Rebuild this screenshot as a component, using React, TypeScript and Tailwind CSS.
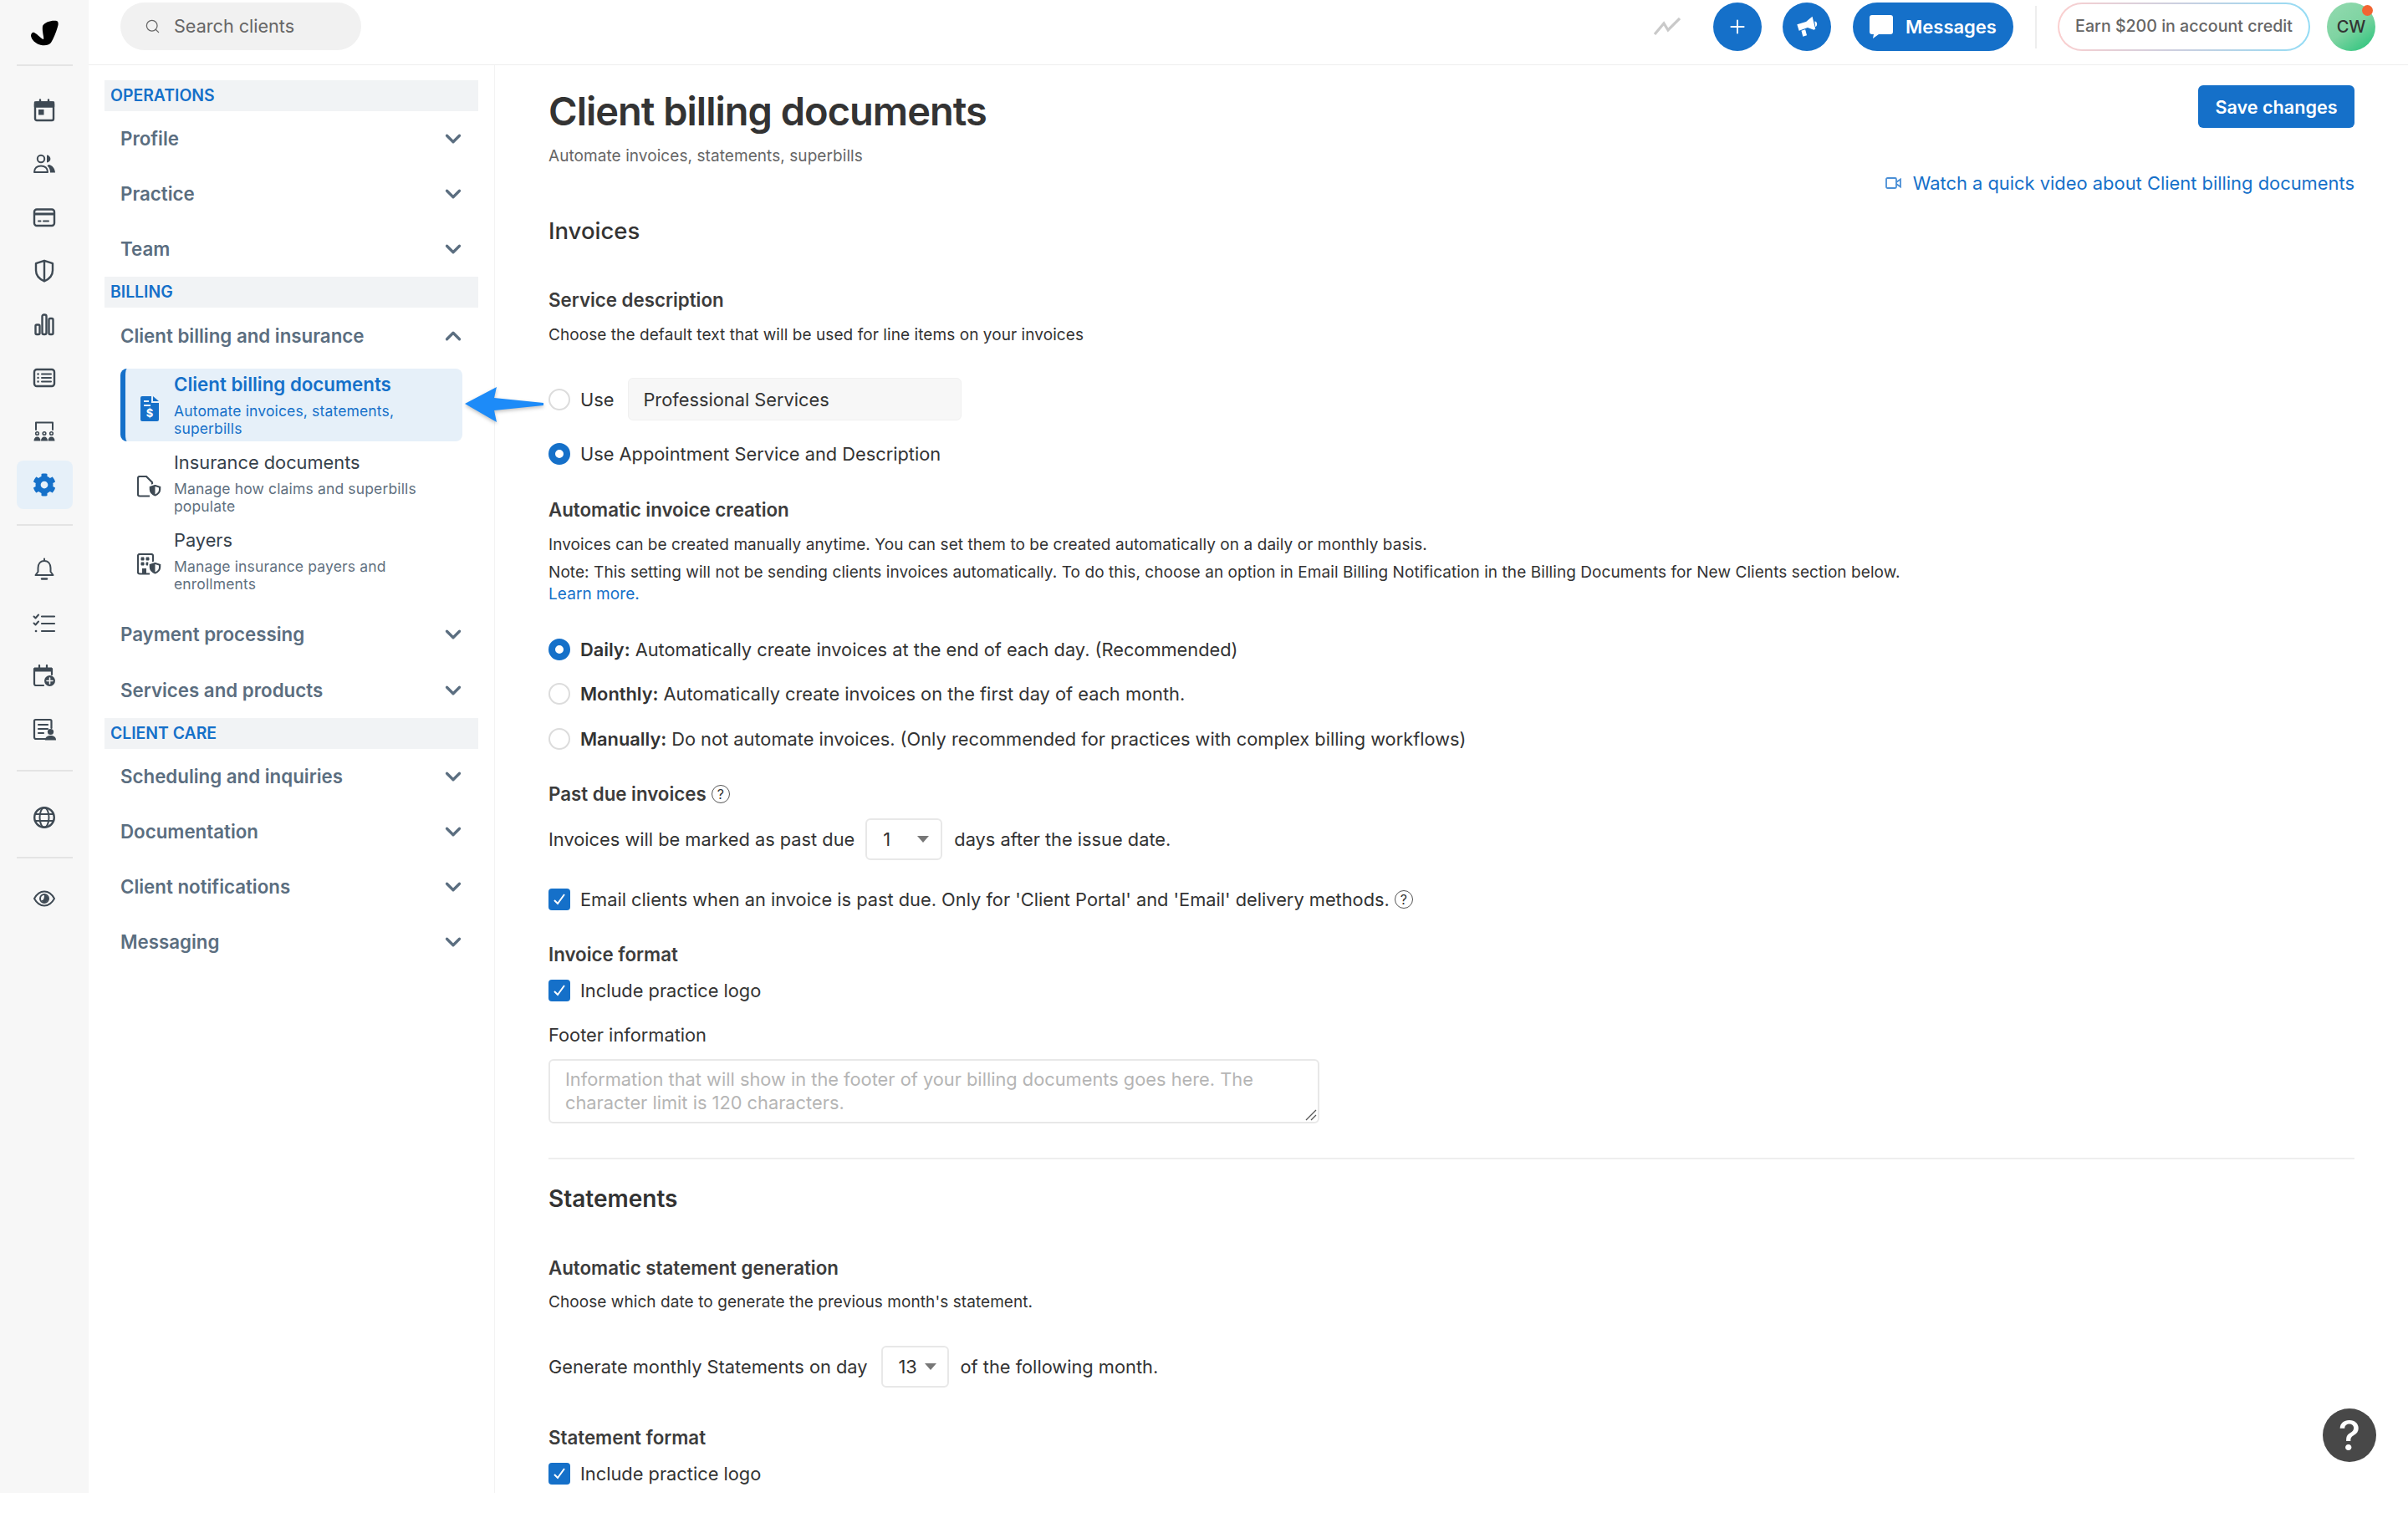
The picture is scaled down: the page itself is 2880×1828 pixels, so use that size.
import React from 'react';
import { ChevronDown, ChevronUp, Plus, Search } from 'lucide-react';
import { FaCog } from 'react-icons/fa';

const Svg = ({ children, size = 28 }: { children: React.ReactNode; size?: number }) => (
  <svg width={size} height={size} viewBox="0 0 28 28" fill="none" stroke="currentColor" strokeWidth="2.4" strokeLinecap="round" strokeLinejoin="round">
    {children}
  </svg>
);

const railTop = [
  <Svg key="cal">
    <rect x="3" y="4.5" width="22" height="21.5" rx="2" />
    <path d="M3 4.5h22v5H3z" fill="currentColor" />
    <path d="M9 1.5v3M19 1.5v3" />
    <rect x="7" y="13" width="6.5" height="6.5" fill="currentColor" stroke="none" />
  </Svg>,
  <Svg key="people">
    <circle cx="10" cy="8" r="4.2" strokeWidth="2" />
    <path d="M17 3.6a4.4 4.4 0 0 1 0 8.8z" fill="currentColor" stroke="none" />
    <path d="M2 24c0-5 3.500-7.500 8-7.500s8 2.500 8 7.500z" strokeWidth="2" />
    <path d="M19 15c4.500.5 7.500 4 8 9.500h-6c0-3.500-1-6-3.500-8z" fill="currentColor" stroke="none" />
  </Svg>,
  <Svg key="card">
    <rect x="2" y="4.500" width="24" height="19.500" rx="3" />
    <path d="M2 8.500h24v3H2z" fill="currentColor" stroke="none" />
    <path d="M7 18.500h2.500M13 18.500h6" strokeWidth="2" />
  </Svg>,
  <Svg key="shield">
    <path d="M14 1.800l10 3.400v8.300c0 6.500-4.500 10.500-10 13-5.500-2.500-10-6.500-10-13V5.200zM14 2v24" />
  </Svg>,
  <Svg key="chart">
    <rect x="3.500" y="14.500" width="5" height="11.500" rx="1.500" />
    <rect x="11.500" y="2.500" width="5" height="23.500" rx="2" />
    <rect x="19.500" y="7" width="5" height="19" rx="1.500" />
  </Svg>,
  <Svg key="list">
    <rect x="2" y="4" width="24" height="20" rx="3" />
    <path d="M11 9.500h11M11 14h11M11 18.500h11" strokeWidth="2" />
    <path d="M6.500 9.500h.1M6.500 14h.1M6.500 18.500h.1" strokeWidth="2.400" />
  </Svg>,
  <Svg key="room">
    <path d="M4 12V3.500h20V12" strokeWidth="2" />
    <circle cx="5.500" cy="16.500" r="1.800" strokeWidth="1.600" />
    <circle cx="14" cy="16.500" r="1.800" strokeWidth="1.600" />
    <circle cx="22.500" cy="16.500" r="1.800" strokeWidth="1.600" />
    <path d="M1.500 25.500c0-3 1.500-5 4-5s4 2 4 5zM10 25.500c0-3 1.500-5 4-5s4 2 4 5zM18.500 25.500c0-3 1.500-5 4-5s4 2 4 5z" fill="currentColor" stroke="none" />
  </Svg>,
];

const railMid = [
  <Svg key="bell">
    <path d="M14 1.500v2.500M14 4c-5 0-7.500 4-7.500 8.500v4.500l-3 4h21l-3-4v-4.500C21.500 8 19 4 14 4z" strokeWidth="2" />
    <path d="M11 25.500h6" strokeWidth="2.400" />
  </Svg>,
  <Svg key="tasks">
    <path d="M1.500 6.500l2 2 3.500-4M1.500 14.500l2 2 3.500-4" strokeWidth="2" />
    <path d="M11 6.500h15M11 15h15M11 24h15" strokeWidth="2.200" />
    <path d="M4 24h.1" strokeWidth="2.600" />
  </Svg>,
  <Svg key="calplus">
    <path d="M13 25H4a2 2 0 0 1-2-2V5h21v7" strokeWidth="2.200" />
    <path d="M2 3.500h21v5H2z" fill="currentColor" stroke="none" />
    <path d="M8 1v3M17 1v3" strokeWidth="2.200" />
    <circle cx="20.500" cy="19.500" r="6.500" fill="currentColor" stroke="none" />
    <path d="M20.500 16v7M17 19.500h7" stroke="#f7f7f7" strokeWidth="1.600" />
  </Svg>,
  <Svg key="docperson">
    <path d="M16 25H4a2 2 0 0 1-2-2V3.500a1.500 1.500 0 0 1 1.500-1.500H21a1.500 1.500 0 0 1 1.500 1.500V12" strokeWidth="2.200" />
    <path d="M7 8h11M7 13h11M7 18h6" strokeWidth="2.200" />
    <circle cx="21.500" cy="16.500" r="3.600" fill="currentColor" stroke="none" />
    <path d="M15 26.500c0-4 3-5.500 6.500-5.500s6.500 1.500 6.500 5.500z" fill="currentColor" stroke="none" />
  </Svg>,
];

const RailButton = ({ children, active }: { children: React.ReactNode; active?: boolean }) => (
  <div className={`flex h-[58px] w-[67px] items-center justify-center rounded-[8px] ${active ? 'bg-[#e6f0f9] text-[#1570c9]' : 'text-[#3f4a54]'}`}>
    {children}
  </div>
);

const RailLine = ({ className }: { className: string }) => <div className={`h-[2px] w-[67px] bg-[#e4e4e4] ${className}`} />;

function Rail() {
  return (
    <aside className="flex h-full w-[106px] shrink-0 flex-col items-center bg-[#f7f7f7]">
      <div className="flex h-[77px] items-center justify-center">
        <svg width="33" height="31" viewBox="0 0 33 31" fill="#000" className="mt-[1px]">
          <path d="M14 7C17 2 25 0 31 1c2 1 2 4 1 7-2 7-5 14-8 19-3 4-10 4-15 2-4-2-8-5-9-10 0-3 2-5 4-4 4 2 9 8 11 8 1-2-2-9-1-16z" />
        </svg>
      </div>
      <RailLine className="" />
      <div className="mt-[24px] flex flex-col gap-[6px]">
        {railTop.map((icon, i) => (
          <RailButton key={i}>{icon}</RailButton>
        ))}
        <RailButton active>
          <FaCog size={28} />
        </RailButton>
      </div>
      <RailLine className="mt-[18px]" />
      <div className="mt-[23px] flex flex-col gap-[6px]">
        {railMid.map((icon, i) => (
          <RailButton key={i}>{icon}</RailButton>
        ))}
      </div>
      <RailLine className="mt-[19px]" />
      <div className="mt-[26px]">
        <RailButton>
          <Svg>
            <circle cx="14" cy="14" r="11.800" />
            <ellipse cx="14" cy="14" rx="5.500" ry="11.800" strokeWidth="2" />
            <path d="M3 10h22M3 18h22" strokeWidth="2" />
          </Svg>
        </RailButton>
      </div>
      <RailLine className="mt-[18px]" />
      <div className="mt-[19px]">
        <RailButton>
          <Svg>
            <path d="M2 14c3-5.500 7-8.500 12-8.500S23 8.500 26 14c-3 5.500-7 8.500-12 8.500S5 19.500 2 14z" strokeWidth="2" />
            <circle cx="14" cy="14" r="5" strokeWidth="2" />
            <path d="M14 9.500a4.500 4.500 0 0 1 0 9c-2 0-3-1-3.500-2.500 2 .5 3.500-1 3.500-6.500z" fill="currentColor" stroke="none" />
          </Svg>
        </RailButton>
      </div>
    </aside>
  );
}

function TopBar() {
  return (
    <header className="flex h-[78px] shrink-0 items-start justify-between border-b border-[#eeeeee] pl-[38px] pr-[39px] pt-[3px]">
      <div className="flex h-[57px] w-[288px] items-center rounded-full bg-[#f1f1f1] pl-[29px] text-[#666666]">
        <Search size={19} strokeWidth={1.6} />
        <span className="ml-[16px] text-[21.600px]">Search clients</span>
      </div>
      <div className="flex items-center">
        <svg width="32" height="22" viewBox="0 0 32 22" fill="none" stroke="#c9c9c9" strokeWidth="3.200">
          <path d="M1 20L12 7l5 8L31 1" />
        </svg>
        <div className="ml-[39px] flex h-[58px] w-[58px] items-center justify-center rounded-full bg-[#1570c9] text-white">
          <Plus size={26} strokeWidth={1.8} />
        </div>
        <div className="ml-[25px] flex h-[58px] w-[58px] items-center justify-center rounded-full bg-[#1570c9]">
          <svg width="28" height="28" viewBox="0 0 30 30" fill="#fff">
            <path d="M22 2l4 16-2 1-8-3-11 4-2.500-8L14 8.500z" />
            <path d="M8 20l5-1.500 2 7.500-5 1.500z" />
            <path d="M25 8c2 0 3 1.500 3 3.500S27 15 26 15z" />
          </svg>
        </div>
        <div className="ml-[26px] flex h-[58px] w-[192px] items-center rounded-full bg-[#1570c9] pl-[20px] text-white">
          <svg width="28" height="28" viewBox="0 0 28 28" fill="#fff">
            <path d="M3 0h22a3 3 0 0 1 3 3v17a3 3 0 0 1-3 3H11l-7 5 1-5H3a3 3 0 0 1-3-3V3a3 3 0 0 1 3-3z" />
          </svg>
          <span className="ml-[15px] text-[22px] font-semibold">Messages</span>
        </div>
        <div className="ml-[26px] h-[51px] w-[2px] bg-[#eeeeee]" />
        <div className="ml-[25px] h-[58px] w-[302px] rounded-full bg-[linear-gradient(90deg,#fbcfcf,#c9cfe0,#93dcf5)] p-[2px]">
          <div className="flex h-full items-center justify-center rounded-full bg-white text-[19.600px] font-medium text-[#666666]">
            Earn $200 in account credit
          </div>
        </div>
        <div className="relative ml-[20px] flex h-[58px] w-[58px] items-center justify-center rounded-full bg-[linear-gradient(145deg,#93dab0,#7fd4a2_50%,#22c278)] text-[20px] font-medium text-[#333333]">
          CW
          <span className="absolute right-[3px] top-[3px] h-[13px] w-[13px] rounded-full bg-[#f26532]" />
        </div>
      </div>
    </header>
  );
}

const Band = ({ label }: { label: string }) => (
  <div className="flex h-[37px] items-center bg-[#f1f3f5] pl-[7px] text-[19.400px] font-semibold text-[#1570c9]">{label}</div>
);

const NavItem = ({ label, open, className = 'h-[66px]' }: { label: string; open?: boolean; className?: string }) => (
  <div className={`flex items-center justify-between pl-[19px] pr-[15px] text-[22.300px] font-semibold text-[#5b6e80] ${className}`}>
    <span>{label}</span>
    {open ? <ChevronUp size={30} strokeWidth={2.6} /> : <ChevronDown size={30} strokeWidth={2.6} />}
  </div>
);

const SubItem = ({ icon, title, desc, active }: { icon: React.ReactNode; title: string; desc: string[]; active?: boolean }) => (
  <div className={`ml-[19px] flex h-[87px] w-[409px] rounded-[8px] ${active ? 'border-l-[6px] border-[#1570c9] bg-[#e6f0f9]' : 'pl-[6px]'}`}>
    <div className="flex w-[58px] shrink-0 items-center justify-center pt-[8px]">{icon}</div>
    <div className="pt-[5px]">
      <div className={`h-[28px] leading-[28px] ${active ? 'text-[22.300px] font-semibold text-[#1570c9]' : 'text-[21.800px] text-[#36414b]'}`}>{title}</div>
      <div className={`mt-[7px] text-[17.500px] leading-[21px] tracking-[0.15px] ${active ? 'text-[#1570c9]' : 'text-[#5f7080]'}`}>
        {desc.map(line => (
          <div key={line}>{line}</div>
        ))}
      </div>
    </div>
  </div>
);

function SettingsNav() {
  return (
    <nav className="h-full w-[486px] shrink-0 border-r border-[#f3f3f3] pl-[19px] pr-[19px] pt-[18px]">
      <Band label="OPERATIONS" />
      <NavItem label="Profile" />
      <NavItem label="Practice" />
      <NavItem label="Team" />
      <Band label="BILLING" />
      <NavItem label="Client billing and insurance" open className="h-[67px]" />
      <div className="mt-[6px] flex flex-col gap-[6px]">
        <SubItem
          active
          title="Client billing documents"
          desc={['Automate invoices, statements,', 'superbills']}
          icon={
            <svg width="22" height="30" viewBox="0 0 22 30" fill="#1570c9">
              <path d="M2 0h11v8h9v20a2 2 0 0 1-2 2H2a2 2 0 0 1-2-2V2a2 2 0 0 1 2-2z" />
              <path d="M15 0l7 6h-7z" />
              <path d="M4 5h6v2H4zM4 10h8v2H4z" fill="#e6f0f9" />
              <text x="11" y="25" textAnchor="middle" fontSize="13" fontWeight="700" fill="#fff" fontFamily="Inter, sans-serif">$</text>
            </svg>
          }
        />
        <SubItem
          title="Insurance documents"
          desc={['Manage how claims and superbills', 'populate']}
          icon={
            <svg width="30" height="26" viewBox="0 0 30 26" fill="none" stroke="#3f4a54" strokeWidth="2.200" strokeLinejoin="round">
              <path d="M15 24.500H3a2 2 0 0 1-2-2V3a2 2 0 0 1 2-2h8l7 7v3" />
              <path d="M21.500 10l7.500 2.500v4c0 4.500-3.500 7.500-7.500 9-4-1.500-7.500-4.500-7.500-9v-4z" fill="#3f4a54" stroke="#fff" strokeWidth="1.500" />
              <path d="M21.500 13l4.500 1.500v2.500c0 2.500-2 4.500-4.500 5.500z" fill="#fff" stroke="none" />
            </svg>
          }
        />
        <SubItem
          title="Payers"
          desc={['Manage insurance payers and', 'enrollments']}
          icon={
            <svg width="30" height="26" viewBox="0 0 30 26" fill="none" stroke="#3f4a54" strokeWidth="2.200" strokeLinejoin="round">
              <path d="M15 24.500H3a2 2 0 0 1-2-2V3a2 2 0 0 1 2-2h14a2 2 0 0 1 2 2v8" />
              <path d="M5 5h3v3H5zM11 5h3v3h-3zM5 11h3v3H5zM11 11h2v3h-2z" fill="#3f4a54" strokeWidth="1" />
              <path d="M6 24v-6h5v6z" fill="#3f4a54" stroke="none" />
              <path d="M21.500 10l7.500 2.500v4c0 4.500-3.500 7.500-7.500 9-4-1.500-7.500-4.500-7.500-9v-4z" fill="#3f4a54" stroke="#fff" strokeWidth="1.500" />
              <path d="M21.500 13l4.500 1.500v2.500c0 2.500-2 4.500-4.500 5.500z" fill="#fff" stroke="none" />
            </svg>
          }
        />
      </div>
      <NavItem label="Payment processing" className="mt-[12px] h-[66px]" />
      <NavItem label="Services and products" className="h-[67px]" />
      <Band label="CLIENT CARE" />
      <NavItem label="Scheduling and inquiries" />
      <NavItem label="Documentation" />
      <NavItem label="Client notifications" />
      <NavItem label="Messaging" />
    </nav>
  );
}

const Radio = ({ on }: { on?: boolean }) =>
  on ? (
    <span className="h-[26px] w-[26px] shrink-0 rounded-full border-[8px] border-[#1570c9] bg-white" />
  ) : (
    <span className="h-[26px] w-[26px] shrink-0 rounded-full border-2 border-[#dcdcdc] bg-white" />
  );

const Check = () => (
  <span className="flex h-[26px] w-[26px] shrink-0 items-center justify-center rounded-[4px] bg-[#1570c9]">
    <svg width="16" height="14" viewBox="0 0 16 14" fill="none" stroke="#fff" strokeWidth="2">
      <path d="M2 8l4 4 8-11" />
    </svg>
  </span>
);

const HelpDot = () => (
  <span className="ml-[6px] flex h-[22px] w-[22px] items-center justify-center rounded-full border-[1.500px] border-[#555555] text-[16px] font-normal leading-none text-[#333333]">?</span>
);

const Row = ({ children, className = '' }: { children: React.ReactNode; className?: string }) => (
  <div className={`flex h-[28px] items-center text-[21.800px] leading-[28px] text-[#333333] ${className}`}>{children}</div>
);

const Option = ({ on, label, text, className }: { on?: boolean; label: string; text: string; className: string }) => (
  <Row className={className}>
    <Radio on={on} />
    <span className="ml-[12px] font-semibold">{label}</span>
    <span className="ml-[6px]">{text}</span>
  </Row>
);

const Heading = ({ children, className }: { children: React.ReactNode; className: string }) => (
  <div className={`flex h-[30px] items-center text-[22.300px] font-semibold leading-[30px] text-[#3c3c3c] ${className}`}>{children}</div>
);

const Section = ({ children, className }: { children: React.ReactNode; className: string }) => (
  <h2 className={`h-[36px] leading-[36px] text-[#333333] ${className}`}>{children}</h2>
);

const Small = ({ children, className }: { children: React.ReactNode; className: string }) => (
  <p className={`h-[26px] text-[19px] leading-[26px] tracking-[0.07px] text-[#333333] ${className}`}>{children}</p>
);

const Select = ({ value, className }: { value: string; className: string }) => (
  <span className={`flex h-[50px] items-center rounded-[6px] border-2 border-[#e8e8e8] bg-white ${className}`}>
    <span className="text-[21.800px] text-[#333333]">{value}</span>
    <span className="ml-auto h-0 w-0 border-x-[7px] border-t-[8px] border-x-transparent border-t-[#777777]" />
  </span>
);

function BillingForm() {
  return (
    <main className="min-w-0 flex-1 pl-[64px] pr-[64px]">
      <div className="flex h-[123px] items-start justify-between pt-[24px]">
        <div className="mt-[3px]">
          <h1 className="h-[56px] text-[47px] font-semibold leading-[56px] tracking-[-1px] text-[#333333]">Client billing documents</h1>
          <p className="mt-[12px] h-[28px] text-[19px] leading-[28px] tracking-[0.07px] text-[#666666]">Automate invoices, statements, superbills</p>
        </div>
        <div className="flex flex-col items-end">
          <button className="h-[51px] w-[187px] rounded-[6px] bg-[#1570c9] pt-[1px] text-[21.600px] font-semibold text-white">Save changes</button>
          <a className="mt-[52px] flex h-[28px] items-center text-[21.900px] text-[#1570c9]">
            <svg width="20" height="14" viewBox="0 0 20 14" fill="none" stroke="#4a8fd6" strokeWidth="1.800" className="mr-[13px]">
              <rect x="1" y="1" width="12" height="12" rx="1.500" />
              <path d="M13 6l5-3.500v9L13 8" />
            </svg>
            Watch a quick video about Client billing documents
          </a>
        </div>
      </div>

      <Section className="mt-[57px] text-[27.500px] font-medium">Invoices</Section>
      <Heading className="mt-[50px]">Service description</Heading>
      <Small className="mt-[14px]">Choose the default text that will be used for line items on your invoices</Small>
      <div className="mt-[38px] flex h-[51px] items-center text-[21.800px] text-[#333333]">
        <Radio />
        <span className="ml-[12px] pt-[2px]">Use</span>
        <span className="ml-[17px] flex h-[51px] w-[399px] items-center rounded-[6px] border border-[#f0f0f0] bg-[#f7f7f7] pl-[17px] pt-[2px]">Professional Services</span>
      </div>
      <Row className="mt-[26px]">
        <Radio on />
        <span className="ml-[12px]">Use Appointment Service and Description</span>
      </Row>

      <Heading className="mt-[38px]">Automatic invoice creation</Heading>
      <Small className="mt-[14px]">Invoices can be created manually anytime. You can set them to be created automatically on a daily or monthly basis.</Small>
      <Small className="mt-[7px]">Note: This setting will not be sending clients invoices automatically. To do this, choose an option in Email Billing Notification in the Billing Documents for New Clients section below.</Small>
      <p className="h-[26px] text-[19px] leading-[26px] tracking-[0.07px] text-[#1570c9]">Learn more.</p>

      <Option on label="Daily:" text="Automatically create invoices at the end of each day. (Recommended)" className="mt-[39px]" />
      <Option label="Monthly:" text="Automatically create invoices on the first day of each month." className="mt-[25px]" />
      <Option label="Manually:" text="Do not automate invoices. (Only recommended for practices with complex billing workflows)" className="mt-[26px]" />

      <Heading className="mt-[37px]">
        Past due invoices
        <HelpDot />
      </Heading>
      <div className="mt-[14px] flex h-[50px] items-center text-[21.800px] text-[#333333]">
        Invoices will be marked as past due
        <Select value="1" className="ml-[13px] w-[92px] pl-[19px] pr-[14px]" />
        <span className="ml-[14px]">days after the issue date.</span>
      </div>
      <Row className="mt-[33px]">
        <Check />
        <span className="ml-[12px]">Email clients when an invoice is past due. Only for 'Client Portal' and 'Email' delivery methods.</span>
        <HelpDot />
      </Row>

      <Heading className="mt-[37px]">Invoice format</Heading>
      <Row className="mt-[14px]">
        <Check />
        <span className="ml-[12px]">Include practice logo</span>
      </Row>
      <Row className="mt-[25px]">Footer information</Row>
      <div className="relative mt-[15px] h-[77px] w-[922px] rounded-[6px] border-2 border-[#e8e8e8] pl-[18px] pt-[8px] text-[21.800px] leading-[28px] text-[#b5b5b5]">
        <p>Information that will show in the footer of your billing documents goes here. The</p>
        <p>character limit is 120 characters.</p>
        <svg width="14" height="14" viewBox="0 0 14 14" stroke="#555555" strokeWidth="1.300" className="absolute bottom-[1px] right-[1px]">
          <path d="M1 13L13 1M7 13l6-6" />
        </svg>
      </div>

      <div className="mt-[41px] h-[2px] bg-[#eeeeee]" />

      <Section className="mt-[29px] text-[28px] font-semibold">Statements</Section>
      <Heading className="mt-[50px]">Automatic statement generation</Heading>
      <Small className="mt-[13px]">Choose which date to generate the previous month's statement.</Small>
      <div className="mt-[39px] flex h-[50px] items-center text-[21.800px] text-[#333333]">
        Generate monthly Statements on day
        <Select value="13" className="ml-[16px] w-[81px] pl-[19px] pr-[13px]" />
        <span className="ml-[14px]">of the following month.</span>
      </div>
      <Heading className="mt-[45px]">Statement format</Heading>
      <Row className="mt-[14px]">
        <Check />
        <span className="ml-[12px]">Include practice logo</span>
      </Row>
    </main>
  );
}

export default function App() {
  return (
    <div className="relative flex h-[1786px] w-[2880px] overflow-hidden bg-white font-['Inter',sans-serif]">
      <Rail />
      <div className="flex min-w-0 flex-1 flex-col">
        <TopBar />
        <div className="flex min-h-0 flex-1">
          <SettingsNav />
          <BillingForm />
        </div>
      </div>

      {/* annotation arrow over the nav */}
      <svg width="96" height="44" viewBox="0 0 96 44" className="absolute left-[555px] top-[462px] drop-shadow-[0_2px_2px_rgba(0,0,0,0.25)]">
        <path d="M1 21L39 1l-3 13 59 6v3l-59 6 3 14z" fill="#1d8bf8" />
      </svg>

      <div className="absolute left-[2778px] top-[1685px] flex h-[64px] w-[64px] items-center justify-center rounded-full bg-[#484848] text-[50px] font-medium leading-none text-white">?</div>
    </div>
  );
}
